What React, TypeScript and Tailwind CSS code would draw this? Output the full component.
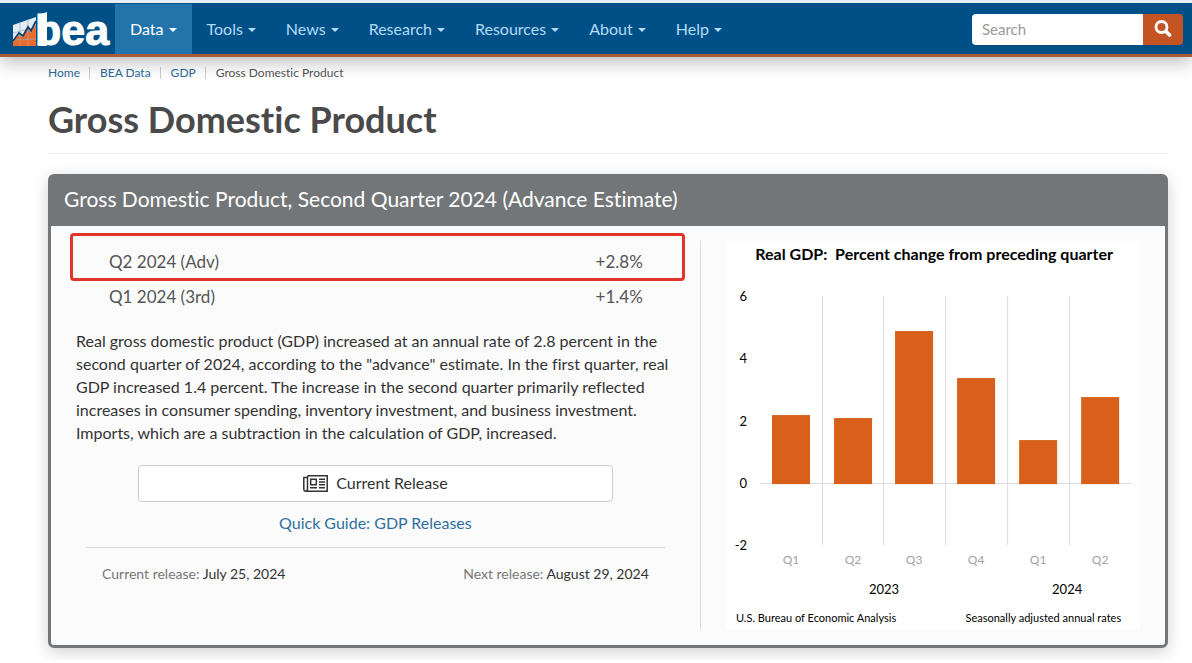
import type { ReactNode } from "react";

type NavItemType = {
  label: string;
  active?: boolean;
};

type QuarterType = {
  label: string;
  value: number;
};

const NAV_ITEMS: NavItemType[] = [
  { label: "Data", active: true },
  { label: "Tools" },
  { label: "News" },
  { label: "Research" },
  { label: "Resources" },
  { label: "About" },
  { label: "Help" },
];

const QUARTERS: QuarterType[] = [
  { label: "Q1", value: 2.2 },
  { label: "Q2", value: 2.1 },
  { label: "Q3", value: 4.9 },
  { label: "Q4", value: 3.4 },
  { label: "Q1", value: 1.4 },
  { label: "Q2", value: 2.8 },
];

const BeaLogo = () => (
  <svg
    width="102"
    height="50"
    viewBox="0 -8 102 50"
    role="img"
    aria-label="bea"
    className="overflow-visible"
  >
    <path d="M1 13 L24 5 V34 H1 Z" fill="#e4edf4" />
    <path d="M1 30 L7 23 L11 25 L16 17 L19 21 L24 12 V34 H1 Z" fill="#ee6a2b" />
    <path
      d="M1 21 L24 15 M8 10 V34 M16 7 V34 M1 28 L24 27"
      stroke="#8fa9bf"
      strokeWidth="0.7"
      fill="none"
    />
    <path
      d="M1 29 L7 21 L11 24 L16 15 L19 19 L24 9"
      stroke="#123c63"
      strokeWidth="1.8"
      fill="none"
    />
    <path d="M26 3 L35 0 V34 H26 Z" fill="#fff" />
    <text
      x="23"
      y="33"
      fill="#fff"
      stroke="#fff"
      strokeWidth="1"
      className="font-['Liberation_Sans',Arial,sans-serif] text-[43px] leading-none font-bold"
    >
      bea
    </text>
  </svg>
);

const NavItem = ({ label, active }: NavItemType) => (
  <li>
    <button
      type="button"
      className={`flex h-[50px] items-center gap-[5px] px-[15px] text-base ${
        active ? "bg-[#2374ab] text-white" : "text-[#b3dbf7]"
      }`}
    >
      {label}
      <svg width="8" height="4" viewBox="0 0 8 4" className="mt-0.5" aria-hidden="true">
        <path d="M0 0 H8 L4 4 Z" fill="currentColor" />
      </svg>
    </button>
  </li>
);

const Header = () => (
  <header className="relative border-t-[3px] border-b-[3px] border-t-[#e4f0f6] border-b-[#a85a3c] bg-[#005088] shadow-[0_4px_18px_rgba(0,0,0,0.3)]">
    <nav className="flex items-center pt-px pr-[9px] pl-3">
      <a href="#" className="mr-px">
        <BeaLogo />
      </a>
      <ul className="flex">
        {NAV_ITEMS.map((item) => (
          <NavItem key={item.label} {...item} />
        ))}
      </ul>
      <form className="ml-auto flex h-[31px]">
        <input
          type="search"
          aria-label="Search"
          placeholder="Search"
          className="w-[171px] rounded-l bg-white px-2.5 text-[15px] placeholder:text-[#999]"
        />
        <button
          type="submit"
          aria-label="Submit search"
          className="flex w-10 items-center justify-center rounded-r bg-[#c55424]"
        >
          <svg width="18" height="18" viewBox="0 0 18 18" fill="none" stroke="#fff">
            <circle cx="7.5" cy="7" r="5.5" strokeWidth="2.8" />
            <path d="M11.8 11.3 L15.5 15" strokeWidth="3.6" strokeLinecap="round" />
          </svg>
        </button>
      </form>
    </nav>
  </header>
);

const Crumb = ({ children }: { children: ReactNode }) => (
  <li className="flex items-center after:mr-[10px] after:ml-[9px] after:h-3 after:w-px after:bg-[#ccc] last:after:hidden">
    {children}
  </li>
);

const Breadcrumb = () => (
  <ol className="flex text-xs leading-4 text-[#2b6a99]">
    <Crumb>
      <a href="#">Home</a>
    </Crumb>
    <Crumb>
      <a href="#">BEA Data</a>
    </Crumb>
    <Crumb>
      <a href="#">GDP</a>
    </Crumb>
    <Crumb>
      <span className="text-[#555]">Gross Domestic Product</span>
    </Crumb>
  </ol>
);

const NewspaperIcon = () => (
  <svg width="25" height="17" viewBox="0 0 25 17" fill="none" stroke="#333" aria-hidden="true">
    <path d="M4.5 0.8 H24.2 V16.2 H3 Q0.8 16.2 0.8 14 V2.5 H4.5" strokeWidth="1.5" />
    <path d="M4.5 1 V14 Q4.5 16 3 16" strokeWidth="1.5" />
    <path d="M7.7 4.2 H13.3 V9.8 H7.7 Z" strokeWidth="1.5" />
    <path d="M16 4.2 H22 M16 7 H22 M16 9.8 H22 M7 12.8 H14 M16 12.8 H22" strokeWidth="1.4" />
  </svg>
);

// chart geometry, in viewBox units
const UNIT = 31.2;
const ZERO_Y = 243;
const STEP = 61.7;

const tickY = (value: number) => ZERO_Y - Math.round(value * UNIT);
const columnX = (index: number) => Math.round(index * STEP);

const GdpChart = () => (
  <svg
    viewBox="0 0 414 389"
    role="img"
    aria-label="Real GDP: Percent change from preceding quarter"
    className="h-auto w-full bg-white font-['Lato',sans-serif]"
  >
    <text x="208" y="19" textAnchor="middle" className="text-base font-bold whitespace-pre">
      {"Real GDP:  Percent change from preceding quarter"}
    </text>
    {[6, 4, 2, 0, -2].map((tick) => (
      <text key={tick} x="21" y={tickY(tick) + 4} textAnchor="end" className="text-[13px]">
        {tick}
      </text>
    ))}
    {[1, 2, 3, 4, 5].map((i) => (
      <path key={i} d={`M${columnX(i) + 34.5} 55 V304`} stroke="#dcdce0" />
    ))}
    <path d={`M34 ${ZERO_Y - 0.5} H405`} stroke="#dcdcdc" />
    {QUARTERS.map(({ label, value }, i) => (
      <g key={i}>
        <rect
          x={46 + columnX(i)}
          y={tickY(value)}
          width="38"
          height={ZERO_Y - tickY(value)}
          fill="#d8601a"
        />
        <text x={65 + columnX(i)} y="323" textAnchor="middle" fill="#a3a3a3" className="text-xs">
          {label}
        </text>
      </g>
    ))}
    <text x="158" y="353" textAnchor="middle" className="text-[13px]">
      2023
    </text>
    <text x="341" y="353" textAnchor="middle" className="text-[13px]">
      2024
    </text>
    <text x="10" y="381" className="text-[11px]">
      U.S. Bureau of Economic Analysis
    </text>
    <text x="395" y="381" textAnchor="end" className="text-[11px]">
      Seasonally adjusted annual rates
    </text>
  </svg>
);

const Summary = () => (
  <div className="border-r border-[#ddd] px-[25px]">
    <table className="mt-[3px] w-full text-[17px] leading-[35px] text-[#555]">
      <tbody>
        <tr className="relative">
          <th scope="row" className="pl-[33px] text-left font-normal">
            Q2 2024 (Adv)
            <span className="absolute -top-[11px] -right-[10px] -left-[6px] h-12 rounded border-[3px] border-[#e0352b]" />
          </th>
          <td className="pr-8 text-right">+2.8%</td>
        </tr>
        <tr>
          <th scope="row" className="pl-[33px] text-left font-normal">
            Q1 2024 (3rd)
          </th>
          <td className="pr-8 text-right">+1.4%</td>
        </tr>
      </tbody>
    </table>
    <p className="mt-[15px] text-base leading-[23px] text-[#333]">
      Real gross domestic product (GDP) increased at an annual rate of 2.8 percent in the second
      quarter of 2024, according to the "advance" estimate. In the first quarter, real GDP increased
      1.4 percent. The increase in the second quarter primarily reflected increases in consumer
      spending, inventory investment, and business investment. Imports, which are a subtraction in
      the calculation of GDP, increased.
    </p>
    <a
      href="#"
      className="mx-[62px] mt-[21px] flex h-[37px] items-center justify-center gap-2 rounded border border-[#ccc] bg-white pb-px text-base text-[#333]"
    >
      <NewspaperIcon />
      Current Release
    </a>
    <p className="mt-[9px] text-center text-base leading-[23px]">
      <a href="#" className="text-[#2f6f9f]">
        Quick Guide: GDP Releases
      </a>
    </p>
    <div className="mx-[10px] mt-[13px] flex justify-between border-t border-[#ddd] px-4 pt-4 text-sm leading-5 text-[#777]">
      <p>
        Current release: <span className="text-[#333]">July 25, 2024</span>
      </p>
      <p>
        Next release: <span className="text-[#333]">August 29, 2024</span>
      </p>
    </div>
  </div>
);

const App = () => {
  return (
    <div className="font-['Lato',sans-serif] [font-variant-ligatures:none]">
      <Header />
      <main className="pt-2 pr-6 pb-3 pl-12">
        <Breadcrumb />
        <h1 className="mt-4 border-b border-[#eee] pb-3 text-4xl leading-[44px] font-bold text-[#4a4a4a]">
          Gross Domestic Product
        </h1>
        <section className="mt-5 rounded-md border-[3px] border-[#737678] bg-[#fbfbfb] shadow-[0_4px_16px_rgba(0,0,0,0.18)]">
          <h2 className="bg-[#737678] px-[13px] pt-[7px] pb-3 text-[21px] leading-[30px] text-white">
            Gross Domestic Product, Second Quarter 2024 (Advance Estimate)
          </h2>
          <div className="grid grid-cols-[7fr_5fr] pt-[15px] pb-[15px]">
            <Summary />
            <div className="px-[25px]">
              <GdpChart />
            </div>
          </div>
        </section>
      </main>
    </div>
  );
};

export default App;
